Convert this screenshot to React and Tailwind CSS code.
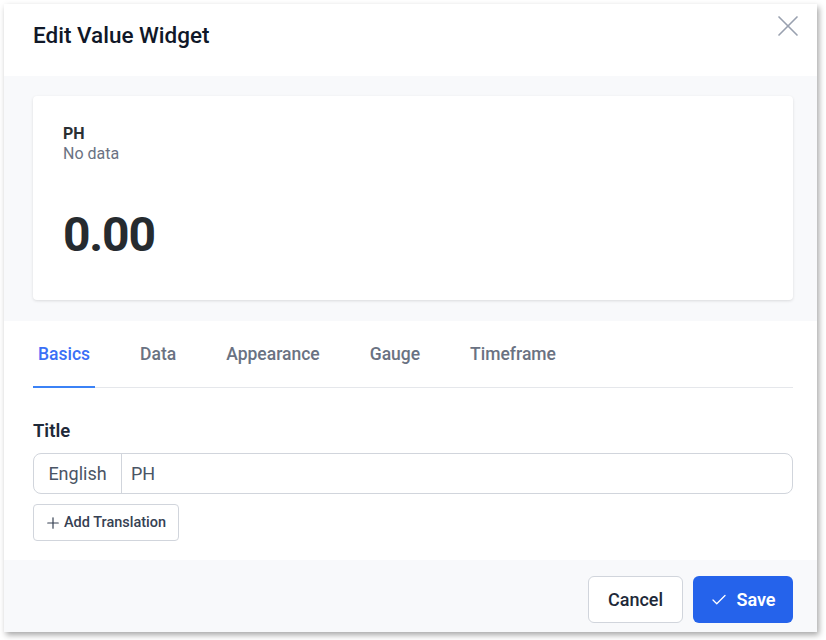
import React, { useState } from 'react';
import { X, Plus, Check } from 'lucide-react';

const TABS = ['Basics', 'Data', 'Appearance', 'Gauge', 'Timeframe'];

const App = () => {
  const [tab, setTab] = useState('Basics');

  return (
    <div className="w-[826px] h-[640px] bg-white p-1 font-['Roboto',sans-serif]">
      <div className="relative w-[813px] h-[628px] bg-white flex flex-col shadow-[2px_3px_6px_rgba(0,0,0,0.35)]">
        {/* Header */}
        <div className="h-[72px] pl-[29px] pr-[24px] pt-[17px]">
          <h2 className="text-[22.5px] leading-7 font-medium text-gray-900">Edit Value Widget</h2>
        </div>
        <button className="absolute top-[4px] right-[11px] text-gray-400">
          <X size={36} strokeWidth={1.1} />
        </button>

        {/* Preview */}
        <div className="bg-[#f8f9fb] pl-[29px] pr-[24px] pt-5 pb-[21px]">
          <div className="bg-white h-[204px] rounded-sm shadow-[0_1px_3px_rgba(0,0,0,0.12)] px-[30px] pt-[28px]">
            <p className="text-base leading-5 font-bold text-[#2a2f33]">PH</p>
            <p className="text-base leading-5 text-gray-500">No data</p>
            <p className="mt-[47px] text-5xl leading-none font-bold tracking-tight text-[#262b2f]">0.00</p>
          </div>
        </div>

        {/* Body */}
        <div className="flex-1 pl-[29px] pr-[24px]">
          <div className="flex gap-[40px] border-b border-gray-200 pt-[21px]">
            {TABS.map((t) => (
              <button
                key={t}
                onClick={() => setTab(t)}
                className={
                  t === tab
                    ? 'px-[5px] pb-[20px] -mb-px text-[17.5px] leading-6 font-medium text-[#3b6ff6] border-b-2 border-[#3b82f6]'
                    : 'px-[5px] pb-[20px] -mb-px text-[17.5px] leading-6 font-medium text-gray-500 border-b-2 border-transparent'
                }
              >
                {t}
              </button>
            ))}
          </div>

          <p className="mt-[31px] text-[18.5px] leading-6 font-semibold text-gray-800">Title</p>
          <div className="mt-[10px] flex h-[41px] border border-gray-300 rounded-lg overflow-hidden">
            <span className="w-[88px] flex items-center justify-center border-r border-gray-300 text-lg text-gray-600">
              English
            </span>
            <input
              defaultValue="PH"
              className="flex-1 px-[9px] text-lg text-gray-600 outline-none"
            />
          </div>
          <button className="mt-[10px] h-[37px] pl-[10px] pr-[12px] flex items-center gap-[2px] border border-gray-300 rounded text-[14.5px] font-medium text-gray-700">
            <Plus size={18} strokeWidth={1.6} />
            Add Translation
          </button>
        </div>

        {/* Footer */}
        <div className="h-[72px] bg-[#f8f9fb] flex items-start justify-end gap-[10px] pl-[29px] pr-[24px] pt-4">
          <button className="h-[47px] w-[95px] border border-gray-300 rounded-md bg-white text-lg font-medium text-gray-800">
            Cancel
          </button>
          <button className="h-[47px] w-[100px] rounded-md bg-[#2563eb] text-white text-lg font-semibold flex items-center justify-center gap-2">
            <Check size={18} strokeWidth={1.75} />
            Save
          </button>
        </div>
      </div>
    </div>
  );
};

export default App;
